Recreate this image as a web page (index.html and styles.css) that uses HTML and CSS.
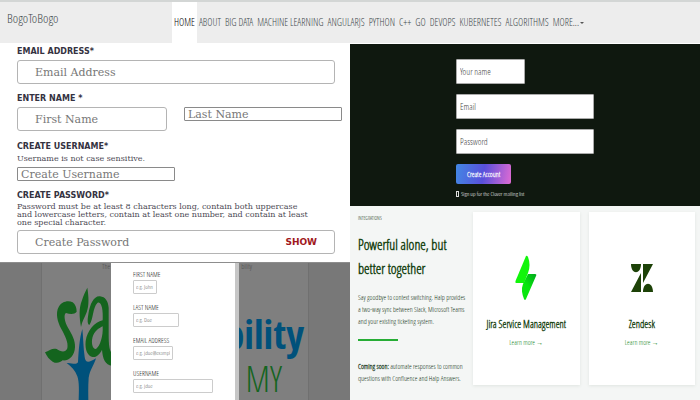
FILE: index.html
```html
<!DOCTYPE html>
<html lang="en">
<head>
<meta charset="utf-8">
<title>BogoToBogo</title>
<link rel="stylesheet" href="styles.css">
</head>
<body>
<header class="topbar">
  <a class="brand" href="#">BogoToBogo</a>
  <nav class="nav">
    <a class="active" href="#">HOME</a><a href="#">ABOUT</a><a href="#">BIG DATA</a><a href="#">MACHINE LEARNING</a><a href="#">ANGULARJS</a><a href="#">PYTHON</a><a href="#">C++</a><a href="#">GO</a><a href="#">DEVOPS</a><a href="#">KUBERNETES</a><a href="#">ALGORITHMS</a><a href="#">MORE...<span class="caret"></span></a>
  </nav>
</header>
<main class="board">
  <div class="column">
    <form class="register">
      <div class="field">
        <label for="email">EMAIL ADDRESS*</label>
        <input class="large" id="email" type="email" placeholder="Email Address">
      </div>
      <div class="field">
        <label for="first">ENTER NAME *</label>
        <div class="names">
          <input class="large" id="first" type="text" placeholder="First Name">
          <input class="small" type="text" aria-label="Last Name" placeholder="Last Name">
        </div>
      </div>
      <div class="field username">
        <label for="username">CREATE USERNAME*</label>
        <p>Username is not case sensitive.</p>
        <input class="small" id="username" type="text" placeholder="Create Username">
      </div>
      <div class="field password">
        <label for="password">CREATE PASSWORD*</label>
        <p>Password must be at least 8 characters long, contain both uppercase<br>and lowercase letters, contain at least one number, and contain at least<br>one special character.</p>
        <div class="secret">
          <input id="password" type="password" placeholder="Create Password">
          <button type="button">SHOW</button>
        </div>
      </div>
    </form>
    <section class="overlay">
      <div class="backdrop">
        <svg class="tree" viewBox="6 6 210 411" aria-hidden="true">
          <g fill="#14641e">
            <path d="M110 152C104 160 92 160 78 156C70 160 74 184 84 200C96 220 106 238 105 258C104 284 88 300 68 298C60 306 48 308 38 302C28 296 20 286 15 274C28 268 38 260 50 264C62 272 76 276 82 262C86 244 74 222 64 204C52 182 46 156 56 138C64 122 84 116 98 124C106 130 110 140 110 152Z"/>
            <path d="M142 80C146 106 148 132 140 154C134 170 126 182 123 198C118 168 116 142 126 118C130 104 136 92 142 80Z"/>
            <path fill-rule="evenodd" d="M180 106C162 104 150 128 145 160C142 178 142 190 148 192C160 176 158 140 172 126C184 118 190 146 188 178C164 184 142 208 137 240C134 268 144 286 158 288C170 290 180 278 186 266C188 294 196 312 216 314V276C206 268 206 240 206 206V140C204 120 196 108 180 106ZM188 196C190 226 180 256 168 264C156 264 152 240 160 222C168 206 180 200 188 196Z"/>
          </g>
          <path fill="#00517b" d="M127 204C130 232 130 262 134 288C136 304 144 308 168 292C162 312 150 326 146 350C144 378 145 400 145 417H116C117 390 118 364 112 346C106 328 94 316 80 306C94 304 106 314 114 304C116 270 118 234 127 204Z"/>
        </svg>
        <div class="wordmark"><b>bility</b><span>MY</span></div>
        <p class="crumb"><span>The</span><span>bility</span></p>
      </div>
      <form class="dialog">
        <label>FIRST NAME<input class="w-first" type="text" placeholder="e.g. John"></label>
        <label>LAST NAME<input class="w-last" type="text" placeholder="e.g. Doe"></label>
        <label>EMAIL ADDRESS<input class="w-email" type="email" placeholder="e.g. jdoe@example.com"></label>
        <label>USERNAME<input class="w-user" type="text" placeholder="e.g. jdoe"></label>
      </form>
    </section>
  </div>
  <div class="column">
    <form class="account">
      <input class="half" type="text" aria-label="Your name" placeholder="Your name">
      <input type="email" aria-label="Email" placeholder="Email">
      <input type="password" aria-label="Password" placeholder="Password">
      <div class="submit">
        <button type="button">Create Account</button>
        <label class="mailing"><input type="checkbox">Sign up for the Clover mailing list</label>
      </div>
    </form>
    <section class="integrations">
      <div class="intro">
        <h3>INTEGRATIONS</h3>
        <h2>Powerful alone, but<br>better together</h2>
        <p>Say goodbye to context switching. Halp provides<br>a two-way sync between Slack, Microsoft Teams<br>and your existing ticketing system.</p>
        <hr>
        <p><b>Coming soon:</b> automate responses to common<br>questions with Confluence and Halp Answers.</p>
      </div>
      <article class="card">
        <svg viewBox="0 0 24 46" aria-hidden="true">
          <defs><linearGradient id="bolt" x1="1" y1="0" x2="0.3" y2="1"><stop offset="0" stop-color="#00a81d"/><stop offset=".6" stop-color="#08e60d"/></linearGradient></defs>
          <path fill="#12f50b" d="M12 1Q13 0 14 2C16 7 16 13 14 18L10 28H2Q1 28 1.500 26Z"/>
          <path fill="url(#bolt)" d="M14 19H21Q23 19 22 21L12 44Q11 46 10 44C8 39 7 34 9 29Z"/>
        </svg>
        <h4>Jira Service Management</h4>
        <a href="#">Learn more →</a>
      </article>
      <article class="card">
        <svg viewBox="0 0 24 46" aria-hidden="true">
          <path fill="#1d4208" d="M1 9H11C11 20 1 20 1 9ZM13 9H23L13 28ZM11 18V37H1ZM13 37C13 26 23 26 23 37Z"/>
        </svg>
        <h4>Zendesk</h4>
        <a href="#">Learn more →</a>
      </article>
    </section>
  </div>
</main>
</body>
</html>
```
FILE: styles.css
```css
* { box-sizing: border-box; }
body {
  margin: 0;
  min-height: 100vh;
  display: flex;
  flex-direction: column;
  background: #fff;
  font-family: "Open Sans Condensed Light", "Open Sans Condensed", "Open Sans", sans-serif;
}
a { color: inherit; text-decoration: none; }
h2, h3, h4, p { margin: 0; }
input, button { font: inherit; margin: 0; min-width: 0; }
input::placeholder { color: inherit; opacity: 1; }

.topbar {
  height: 43px;
  display: flex;
  border-top: 2px solid #d3d6d5;
  background: #ededed;
  color: #3f494c;
}
.brand { width: 172px; padding: 7px; font-size: 13px; line-height: 18px; }
.nav { display: flex; font-size: 10px; line-height: 40px; white-space: nowrap; }
.nav a { padding: 0 2px; }
.nav .active { background: #fff; color: #000; }
.caret { display: inline-block; border: 2px solid transparent; border-top-color: #555; border-bottom: 0; margin-left: 1px; vertical-align: middle; }

.board { flex: 1; display: grid; grid-template-columns: 1fr 1fr; }
.column { display: flex; flex-direction: column; min-width: 0; }

.register {
  padding: 4px 8px 8px 17px;
  display: flex;
  flex-direction: column;
  gap: 10px;
  font: 8px/8px "DejaVu Serif", serif;
  color: #4b4953;
}
.field { display: flex; flex-direction: column; gap: 4px; }
.field label { font: bold 8px/9px "DejaVu Sans", sans-serif; color: #343241; }
.field p { white-space: nowrap; }
.field input { font-size: 11px; color: #777; }
.large, .secret { height: 24px; margin-right: 7px; padding: 0 17px; border: 1px solid #b4b4b4; border-radius: 3px; background: #fff; }
.names { display: grid; grid-template-columns: 157px 1fr; align-items: start; gap: 10px; }
.small { height: 14px; padding: 0 3px; border: 1px solid #8a8a8a; border-radius: 1px; }
.username { padding-top: 1px; }
.username .small { width: 158px; }
.password { gap: 3px; }
.secret { display: flex; align-items: center; justify-content: space-between; }
.secret input { border: 0; padding: 0; background: none; }
.secret button { border: 0; padding: 0; background: none; color: #a01820; font: bold 9px/12px "DejaVu Sans", sans-serif; }

.overlay { position: relative; flex: 1; background: #787878; border-top: 1px solid #8d8d8d; overflow: hidden; }
.backdrop { position: absolute; inset: 0 41px; display: flex; justify-content: space-between; background: #7f7f7f; border: solid #707070; border-width: 0 1px; overflow: hidden; }
.tree { width: 70px; height: 137px; }
.wordmark { display: flex; flex-direction: column; align-items: flex-end; padding: 46px 4px 0 0; color: #00517b; font: 40px/50px "Open Sans Condensed", sans-serif; }
.wordmark span { color: #14641e; padding-right: 22px; font-family: "Open Sans Condensed Light", sans-serif; font-size: 36px; line-height: 40px; }
.crumb { position: absolute; inset: 0 56px auto 60px; display: flex; justify-content: space-between; color: #4c4c4c; font-size: 7px; line-height: 8px; }
.dialog { position: absolute; inset: 0 111px; display: flex; flex-direction: column; gap: 9px; padding: 7px 0 0 22px; background: #fff; border-right: 4px solid #c6c6c6; font-size: 7px; line-height: 10px; color: #111; }
.dialog label { display: flex; flex-direction: column; align-items: flex-start; }
.dialog input { height: 14px; padding: 0 2px; border: 1px solid #ccc; border-radius: 1px; color: #666; font-size: 6px; }
.w-first { width: 24px; }
.w-last { width: 46px; }
.w-email { width: 40px; }
.w-user { width: 80px; }

.account { display: flex; flex-direction: column; align-items: flex-start; gap: 10px; padding: 15px 106px 7px; margin-top: 1px; background: #0f180f; font-size: 9px; }
.account > input { width: 100%; height: 25px; padding: 0 3px; border: 1px solid #aaa; border-radius: 1px; background: #fff; color: #444; }
.account > .half { width: 50%; }
.submit { width: 100%; display: flex; flex-direction: column; gap: 5px; }
.account button { width: 40%; height: 20px; padding: 0; border: 0; border-radius: 2px; color: #fff; background: linear-gradient(100deg, #4288e4, #5950db 50%, #df6bd3); font-size: 7px; font-weight: bold; }
.mailing { display: flex; align-items: center; gap: 2px; color: #fff; font-size: 6px; line-height: 10px; white-space: nowrap; }
.mailing input { appearance: none; width: 3px; height: 6px; border: 1px solid #ddd; }

.integrations { flex: 1; display: grid; grid-template-columns: 106px 1fr 1fr; gap: 9px; padding: 6px 5px 18px 8px; background: #f4f6f5; color: #0f3010; }
.intro { white-space: nowrap; }
h3 { font-size: 5px; font-weight: 400; line-height: 12px; }
h2 { margin-top: 9px; font-size: 14px; line-height: 24px; color: #1c4717; }
.intro p { font-size: 7px; line-height: 12px; }
.intro h2 + p { margin-top: 11px; }
hr { width: 40px; height: 2px; margin: 11px 0 20px; border: 0; background: #26ad35; }
.card { display: flex; flex-direction: column; align-items: center; padding-top: 43px; background: #fff; box-shadow: 0 1px 3px #dfe4e1; white-space: nowrap; }
.card svg { width: 24px; height: 46px; }
h4 { margin-top: 14px; font-size: 10px; line-height: 18px; color: #1c4717; }
.card a { margin-top: 4px; font-size: 7px; line-height: 12px; color: #0f8418; }
```
